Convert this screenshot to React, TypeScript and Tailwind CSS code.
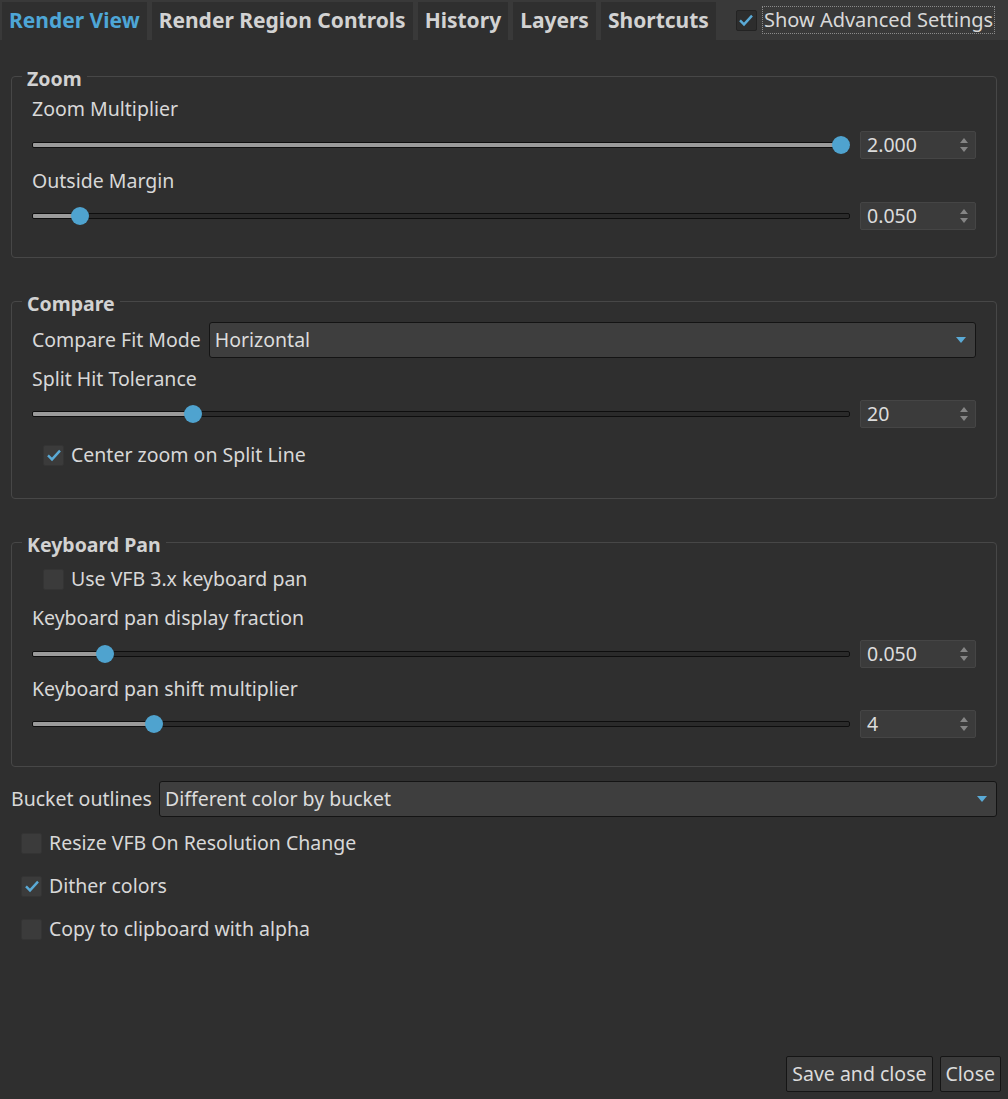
import React from "react";

const font = "font-['Noto_Sans','Open_Sans',sans-serif]";

function CheckMark() {
  return (
    <svg viewBox="0 0 20 20" className="w-[16px] h-[16px]">
      <path d="M2.5 10.5 L7.5 15.5 L17.5 4.5" stroke="#5aaad6" strokeWidth="3" fill="none" />
    </svg>
  );
}

function CheckBox({ checked, dark }: { checked?: boolean; dark?: boolean }) {
  return (
    <div
      className={
        "w-[21px] h-[21px] rounded-[2px] border flex items-center justify-center shrink-0 " +
        (dark ? "bg-[#2d2d2d] border-[#232323]" : "bg-[#3b3b3b] border-[#343434]")
      }
    >
      {checked && <CheckMark />}
    </div>
  );
}

function Slider({ value }: { value: number }) {
  return (
    <div className="relative flex-1 h-[20px] flex items-center">
      <div className="w-full h-[6px] border border-[#0e0e0e] bg-[#2a2a2a] rounded-[2px] overflow-hidden">
        <div className="h-full bg-[#9a9a9a]" style={{ width: `calc(9px + (100% - 18px) * ${value})` }} />
      </div>
      <div
        className="absolute top-[1px] w-[18px] h-[18px] rounded-full bg-[#4fa3cf] -translate-x-1/2"
        style={{ left: `calc(9px + (100% - 18px) * ${value})` }}
      />
    </div>
  );
}

function Spin({ text }: { text: string }) {
  return (
    <div className="w-[116px] h-[28px] bg-[#3b3b3b] border border-[#454545] rounded-[2px] flex items-center justify-between pl-[6px] pr-[7px] shrink-0">
      <span className="text-[#dcdcdc]">{text}</span>
      <div className="flex flex-col gap-[4px]">
        <svg viewBox="0 0 8 5" className="w-[8px] h-[5px]">
          <path d="M0 5 L4 0 L8 5 Z" fill="#858585" />
        </svg>
        <svg viewBox="0 0 8 5" className="w-[8px] h-[5px]">
          <path d="M0 0 L4 5 L8 0 Z" fill="#858585" />
        </svg>
      </div>
    </div>
  );
}

function SliderRow({ value, text }: { value: number; text: string }) {
  return (
    <div className="flex items-center gap-[10px] h-[28px]">
      <Slider value={value} />
      <Spin text={text} />
    </div>
  );
}

function Combo({ text }: { text: string }) {
  return (
    <div className="flex-1 h-[36px] bg-[#3e3e3e] border border-[#141414] rounded-[3px] flex items-center justify-between pl-[5px] pr-[9px]">
      <span className="text-[#dcdcdc]">{text}</span>
      <svg viewBox="0 0 10 6" className="w-[10px] h-[6px]">
        <path d="M0 0 L10 0 L5 6 Z" fill="#5aaad6" />
      </svg>
    </div>
  );
}

function Label({ text, className = "" }: { text: string; className?: string }) {
  return <div className={"h-[28px] flex items-center " + className}>{text}</div>;
}

function CheckRow({ text, checked, className = "" }: { text: string; checked?: boolean; className?: string }) {
  return (
    <div className={"h-[28px] flex items-center gap-[7px] " + className}>
      <CheckBox checked={checked} />
      <span>{text}</span>
    </div>
  );
}

function Group({ title, className = "", children }: { title: string; className?: string; children: React.ReactNode }) {
  return (
    <fieldset className={"mx-[11px] border border-[#474747] rounded-[4px] " + className}>
      <legend className="ml-[10px] px-[5px] pt-[5px] leading-[24px] font-bold text-[#d2d2d2]">{title}</legend>
      {children}
    </fieldset>
  );
}

const tabs = ["Render View", "Render Region Controls", "History", "Layers", "Shortcuts"];

export default function App() {
  return (
    <div className={"w-[1008px] h-[1099px] bg-[#2f2f2f] text-[#d8d8d8] text-[19.5px] flex flex-col " + font}>
      {/* tab bar */}
      <div className="h-[40px] bg-[#393939] flex items-end pl-[2px] shrink-0">
        <div className="flex gap-[5px] h-[38px]">
          {tabs.map((t, i) => (
            <div
              key={t}
              className={
                "h-full px-[7px] flex items-center bg-[#2f2f2f] font-bold text-[21px] " +
                (i === 0 ? "text-[#4ea6d6]" : "text-[#d2d2d2]")
              }
            >
              {t}
            </div>
          ))}
        </div>
        <div className="self-center flex items-center ml-[20px] gap-[5px]">
          <CheckBox checked dark />
          <span className="border border-dotted border-[#8a8a8a] h-[28px] px-[1px] flex items-center text-[20px]">
            Show Advanced Settings
          </span>
        </div>
      </div>

      <Group title="Zoom" className="mt-[22px]">
        <div className="px-[20px] pt-[4px] pb-[27px] flex flex-col">
          <Label text="Zoom Multiplier" />
          <div className="mt-[8px]">
            <SliderRow value={1} text="2.000" />
          </div>
          <Label text="Outside Margin" className="mt-[8px]" />
          <div className="mt-[7px]">
            <SliderRow value={0.049} text="0.050" />
          </div>
        </div>
      </Group>

      <Group title="Compare" className="mt-[29px]">
        <div className="px-[20px] pt-[6px] pb-[29px] flex flex-col">
          <div className="flex items-center gap-[8px]">
            <span>Compare Fit Mode</span>
            <Combo text="Horizontal" />
          </div>
          <Label text="Split Hit Tolerance" className="mt-[7px]" />
          <div className="mt-[7px]">
            <SliderRow value={0.19} text="20" />
          </div>
          <CheckRow text="Center zoom on Split Line" checked className="mt-[13px] pl-[11px]" />
        </div>
      </Group>

      <Group title="Keyboard Pan" className="mt-[29px]">
        <div className="px-[20px] pt-[8px] pb-[28px] flex flex-col">
          <CheckRow text="Use VFB 3.x keyboard pan" className="pl-[11px]" />
          <Label text="Keyboard pan display fraction" className="mt-[11px]" />
          <div className="mt-[8px]">
            <SliderRow value={0.08} text="0.050" />
          </div>
          <Label text="Keyboard pan shift multiplier" className="mt-[7px]" />
          <div className="mt-[7px]">
            <SliderRow value={0.141} text="4" />
          </div>
        </div>
      </Group>

      <div className="px-[11px] mt-[14px] flex items-center gap-[7px]">
        <span>Bucket outlines</span>
        <Combo text="Different color by bucket" />
      </div>

      <div className="pl-[21px] mt-[12px] flex flex-col gap-[15px]">
        <CheckRow text="Resize VFB On Resolution Change" />
        <CheckRow text="Dither colors" checked />
        <CheckRow text="Copy to clipboard with alpha" />
      </div>

      <div className="mt-auto flex justify-end gap-[7px] pr-[7px] pb-[7px]">
        <button className="h-[36px] px-[5px] bg-[#3b3b3b] border border-[#151515] rounded-[2px] text-[#dcdcdc]">
          Save and close
        </button>
        <button className="h-[36px] px-[5px] bg-[#3b3b3b] border border-[#151515] rounded-[2px] text-[#dcdcdc]">
          Close
        </button>
      </div>
    </div>
  );
}
